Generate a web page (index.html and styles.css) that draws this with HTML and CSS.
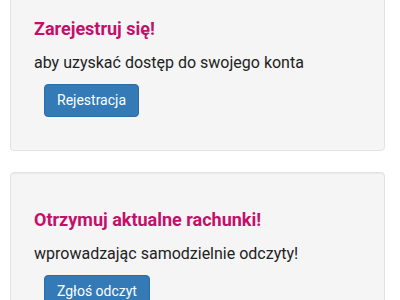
FILE: index.html
```html
<!DOCTYPE html>
<html lang="pl">
<head>
    <meta charset="UTF-8">
    <meta name="viewport" content="width=device-width, initial-scale=1.0">
    <title>Konto</title>
    <link rel="stylesheet" href="styles.css">
</head>
<body>

    <div class="strona">
        <!-- Rejestracja -->
        <div class="karta">
            <h4 class="tytul">Zarejestruj się!</h4>
            <p class="opis">aby uzyskać dostęp do swojego konta</p>
            <div class="akcja"><button type="button" class="botao">Rejestracja</button></div>
        </div>

        <!-- Odczyty -->
        <div class="karta">
            <h4 class="tytul">Otrzymuj aktualne rachunki!</h4>
            <p class="opis">wprowadzając samodzielnie odczyty!</p>
            <div class="akcja"><button type="button" class="botao">Zgłoś odczyt</button></div>
        </div>
    </div>

</body>
</html>
```

FILE: styles.css
```css
* { margin: 0; padding: 0; box-sizing: border-box; font-family: Roboto, "Noto Sans", Arial, sans-serif; }
body { background: #fff; color: #222; overflow: hidden; }
.strona { margin: -19px 15px 0 10px; display: flex; flex-direction: column; gap: 21px; }
.karta { background: #f5f5f5; border: 1px solid #e3e3e3; border-radius: 4px; padding: 19px 19px 19px 23px; box-shadow: inset 0 1px 1px rgba(0, 0, 0, .05); }
.tytul { color: #c4106b; font-size: 18px; font-weight: 700; line-height: 20px; margin: 18px 0 12px; }
.opis { font-size: 16px; line-height: 23px; margin-bottom: 10px; }
.akcja { padding-left: 10px; margin-bottom: 14px; }
.botao { background: #337ab7; color: #fff; border: 1px solid #2e6da4; border-radius: 4px; padding: 6px 12px; font-size: 14px; line-height: 19px; cursor: pointer; }
.botao:hover { background: #286090; }
```
